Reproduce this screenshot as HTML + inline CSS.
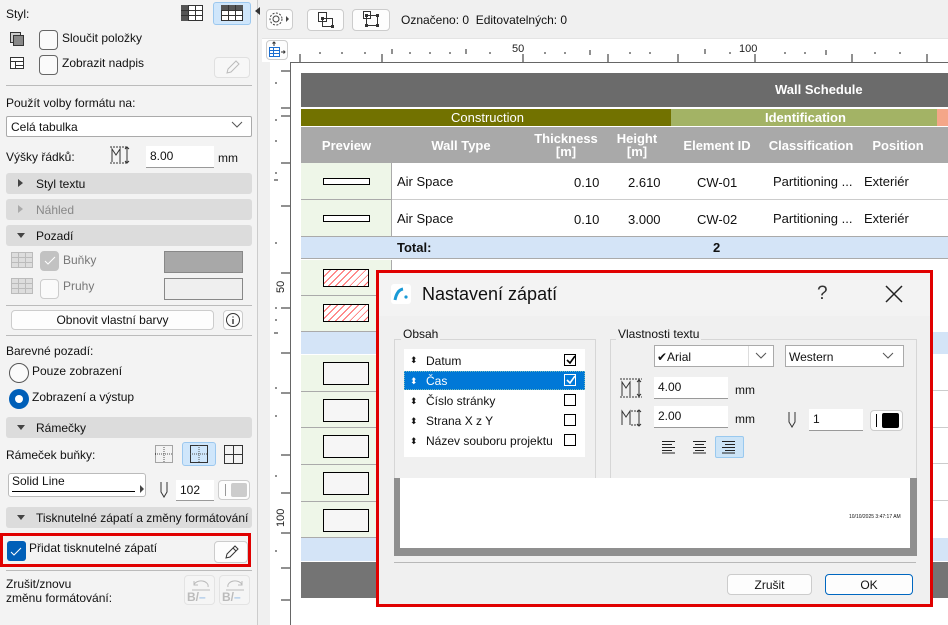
<!DOCTYPE html>
<html style="width:948px;height:625px;overflow:hidden"><head><meta charset="utf-8"><style>
*{box-sizing:border-box;margin:0;padding:0}
html,body{overflow:hidden}
body{width:948px;height:625px;overflow:hidden;background:#f0f0f0;font-family:"Liberation Sans",sans-serif;font-size:12px;color:#111;position:relative}
.a{position:absolute}
.t{position:absolute;white-space:nowrap;line-height:14px}
.cb{position:absolute;width:19px;height:20px;border:1px solid #666;border-radius:4px;background:#fafafa}
.bar{position:absolute;left:6px;width:246px;height:21px;background:#dcdcdc;border-radius:3px}
.bar span{position:absolute;left:30px;top:4px;font-size:12px}
.bar i{position:absolute;left:11px;top:8px;width:0;height:0;border-left:4px solid transparent;border-right:4px solid transparent;border-top:5px solid #444}
.bar i.r{left:12px;top:6px;border-top:4px solid transparent;border-bottom:4px solid transparent;border-left:5px solid #444;border-right:0}
.sep{position:absolute;left:6px;width:246px;height:1px;background:#bbb}
.btn{position:absolute;background:#fdfdfd;border:1px solid #ccc;border-radius:4px}
.inp{position:absolute;background:#fff;border-bottom:1px solid #999;font-size:12px;padding:3px 0 0 4px}
.cell{position:absolute;white-space:nowrap;font-size:13px;line-height:14px}
.hd{position:absolute;color:#fff;font-weight:bold;font-size:13px;text-align:center;line-height:13px}
.pv{position:absolute;left:301px;width:91px;background:#eef6e8;border-bottom:1px solid #aaa;border-right:1px solid #aaa}
.wall{position:absolute;left:22px;width:47px;height:7px;border:1px solid #000;background:#fff}
.hx{position:absolute;left:22px;width:46px;height:18px;border:1px solid #000;background:repeating-linear-gradient(135deg,#fff 0 4px,#f66 4px 5px)}
.sq{position:absolute;left:22px;width:46px;height:23px;border:1px solid #000;background:#f6f6f6}
</style></head><body>

<!-- LEFT PANEL -->
<div class="a" style="left:0;top:0;width:258px;height:625px;background:#f3f3f3;border-right:1px solid #ccc"></div>
<div class="t" style="left:6px;top:7px">Styl:</div>
<svg class="a" style="left:181px;top:5px" width="22" height="16"><rect x="0.5" y="0.5" width="21" height="15" fill="#fff" stroke="#333"/><rect x="0" y="0" width="7" height="16" fill="#555"/><path d="M0 5.5H22M0 10.5H22M7.5 0V16M14.5 0V16" stroke="#333"/></svg>
<div class="a" style="left:213px;top:2px;width:38px;height:23px;background:#cfe6fb;border:1px solid #9cc8ef;border-radius:3px"></div>
<svg class="a" style="left:221px;top:5px" width="22" height="16"><rect x="0.5" y="0.5" width="21" height="15" fill="#fff" stroke="#333"/><rect x="0" y="0" width="22" height="5" fill="#555"/><path d="M0 5.5H22M0 10.5H22M7.5 0V16M14.5 0V16" stroke="#333"/></svg>
<svg class="a" style="left:10px;top:32px" width="14" height="14"><rect x="0.5" y="0.5" width="10" height="10" fill="#ccc" stroke="#333"/><rect x="3.5" y="3.5" width="10" height="10" fill="#888" stroke="#333"/></svg>
<div class="cb" style="left:39px;top:30px"></div>
<div class="t" style="left:62px;top:31px">Sloučit položky</div>
<svg class="a" style="left:10px;top:57px" width="14" height="12"><rect x="0.5" y="0.5" width="13" height="11" fill="#fff" stroke="#333"/><path d="M0 4.5H14M5.5 4V12M5 8.5H14" stroke="#333"/></svg>
<div class="cb" style="left:39px;top:55px"></div>
<div class="t" style="left:62px;top:56px">Zobrazit nadpis</div>
<div class="btn" style="left:214px;top:57px;width:36px;height:21px;background:#f7f7f7;border-color:#e0e0e0"></div>
<svg class="a" style="left:224px;top:60px" width="16" height="16"><path d="M3 13l1-4 8-8 3 3-8 8z" fill="none" stroke="#bbb"/></svg>
<div class="sep" style="top:85px"></div>
<div class="t" style="left:6px;top:96px">Použít volby formátu na:</div>
<div class="a" style="left:6px;top:116px;width:246px;height:21px;background:#fff;border:1px solid #aaa;border-radius:2px"></div>
<div class="t" style="left:11px;top:120px">Celá tabulka</div>
<svg class="a" style="left:231px;top:121px" width="12" height="8"><path d="M1 1l5 5 5-5" fill="none" stroke="#555"/></svg>
<div class="t" style="left:6px;top:150px">Výšky řádků:</div>
<svg class="a" style="left:108px;top:144px" width="24" height="22"><path d="M2 3h18M2 19h18" stroke="#333" stroke-dasharray="2 1"/><path d="M4 18V5l4 6 4-6v13" fill="none" stroke="#333"/><path d="M19 3v16M17 5l2-2 2 2M17 17l2 2 2-2" fill="none" stroke="#333"/></svg>
<div class="inp" style="left:146px;top:146px;width:68px;height:22px">8.00</div>
<div class="t" style="left:218px;top:151px">mm</div>
<div class="bar" style="top:173px"><i class="r"></i><span>Styl textu</span></div>
<div class="bar" style="top:199px"><i class="r" style="border-left-color:#aaa"></i><span style="color:#888">Náhled</span></div>
<div class="bar" style="top:225px"><i></i><span>Pozadí</span></div>
<svg class="a" style="left:11px;top:252px" width="22" height="16"><rect x="0.5" y="0.5" width="21" height="15" fill="#ddd" stroke="#bbb"/><path d="M0 5.5H22M0 10.5H22M7.5 0V16M14.5 0V16" stroke="#bbb"/></svg>
<div class="cb" style="left:40px;top:251px;background:#c2c2c2;border-color:#c2c2c2"></div>
<svg class="a" style="left:44px;top:256px" width="12" height="10"><path d="M1 5l3 3 7-7" fill="none" stroke="#fff"/></svg>
<div class="t" style="left:63px;top:253px;color:#777">Buňky</div>
<div class="a" style="left:164px;top:251px;width:79px;height:22px;background:#a8a8a8;border:1px solid #888"></div>
<svg class="a" style="left:11px;top:278px" width="22" height="16"><rect x="0.5" y="0.5" width="21" height="15" fill="#ddd" stroke="#bbb"/><path d="M0 5.5H22M0 10.5H22M7.5 0V16M14.5 0V16" stroke="#bbb"/></svg>
<div class="cb" style="left:40px;top:279px;border-color:#ccc"></div>
<div class="t" style="left:63px;top:279px;color:#777">Pruhy</div>
<div class="a" style="left:164px;top:278px;width:79px;height:22px;background:#efefef;border:1px solid #888"></div>
<div class="sep" style="top:305px"></div>
<div class="btn" style="left:11px;top:310px;width:203px;height:20px"></div>
<div class="t" style="left:11px;top:313px;width:203px;text-align:center">Obnovit vlastní barvy</div>
<div class="btn" style="left:223px;top:310px;width:20px;height:20px"></div>
<svg class="a" style="left:225px;top:312px" width="16" height="16"><circle cx="8" cy="8" r="6.5" fill="none" stroke="#333"/><path d="M8 7v5M8 4.5v1" stroke="#333" stroke-width="1.4"/></svg>
<div class="sep" style="top:335px"></div>
<div class="t" style="left:6px;top:344px">Barevné pozadí:</div>
<div class="a" style="left:9px;top:363px;width:20px;height:20px;border:1px solid #555;border-radius:50%;background:#fafafa"></div>
<div class="t" style="left:32px;top:364px">Pouze zobrazení</div>
<div class="a" style="left:9px;top:389px;width:20px;height:20px;border-radius:50%;background:#005fb8"></div>
<div class="a" style="left:15px;top:395px;width:8px;height:8px;border-radius:50%;background:#fff"></div>
<div class="t" style="left:32px;top:390px">Zobrazení a výstup</div>
<div class="bar" style="top:417px"><i></i><span>Rámečky</span></div>
<div class="t" style="left:6px;top:448px">Rámeček buňky:</div>
<svg class="a" style="left:155px;top:445px" width="18" height="18"><rect x="0.5" y="0.5" width="17" height="17" fill="none" stroke="#555" stroke-dasharray="1 1"/><path d="M9 0v18M0 9h18" stroke="#555" stroke-dasharray="1 1"/></svg>
<div class="a" style="left:182px;top:442px;width:34px;height:24px;background:#cfe6fb;border:1px solid #9cc8ef;border-radius:3px"></div>
<svg class="a" style="left:190px;top:445px" width="18" height="18"><rect x="0.5" y="0.5" width="17" height="17" fill="none" stroke="#333"/><path d="M9 0v18M0 9h18" stroke="#555" stroke-dasharray="1 1"/></svg>
<svg class="a" style="left:224px;top:445px" width="19" height="19"><rect x="0.5" y="0.5" width="18" height="18" fill="none" stroke="#333"/><path d="M9.5 0v19M0 9.5h19" stroke="#333"/></svg>
<div class="a" style="left:8px;top:473px;width:138px;height:24px;background:#fff;border:1px solid #bbb;border-radius:3px"></div>
<div class="t" style="left:12px;top:474px">Solid Line</div>
<div class="a" style="left:12px;top:491px;width:123px;height:1px;background:#000"></div>
<div class="a" style="left:140px;top:485px;border-top:4px solid transparent;border-bottom:4px solid transparent;border-left:4px solid #444"></div>
<svg class="a" style="left:158px;top:481px" width="12" height="18"><path d="M3 1v10l3 5 3-5V1" fill="none" stroke="#333"/></svg>
<div class="inp" style="left:176px;top:480px;width:38px;height:21px">102</div>
<div class="btn" style="left:218px;top:480px;width:32px;height:20px"></div>
<div class="a" style="left:231px;top:483px;width:16px;height:14px;background:#ccc;border-radius:2px"></div>
<div class="a" style="left:225px;top:484px;width:1px;height:12px;background:#999"></div>
<div class="bar" style="top:507px"><i></i><span>Tisknutelné zápatí a změny formátování</span></div>
<div class="a" style="left:0;top:533px;width:251px;height:34px;border:3px solid #e00000"></div>
<div class="a" style="left:7px;top:541px;width:19px;height:20px;background:#005fb8;border-radius:3px"></div>
<svg class="a" style="left:10px;top:547px" width="13" height="10"><path d="M1 5l3 3 7-7" fill="none" stroke="#fff"/></svg>
<div class="t" style="left:29px;top:541px">Přidat tisknutelné zápatí</div>
<div class="btn" style="left:214px;top:541px;width:34px;height:22px"></div>
<svg class="a" style="left:223px;top:543px" width="16" height="18"><path d="M3 15l1-4 8-8 3 3-8 8zM10 5l3 3" fill="none" stroke="#333"/></svg>
<div class="sep" style="top:570px"></div>
<div class="t" style="left:6px;top:577px">Zrušit/znovu</div>
<div class="t" style="left:6px;top:591px">změnu formátování:</div>
<div class="btn" style="left:184px;top:575px;width:31px;height:30px;background:#f5f5f5;border-color:#e3e3e3"></div>
<div class="btn" style="left:219px;top:575px;width:31px;height:30px;background:#f5f5f5;border-color:#e3e3e3"></div>
<div class="t" style="left:187px;top:590px;color:#bbb;font-weight:bold">B/<span style="color:#a8c8e8">–</span></div>
<div class="t" style="left:222px;top:590px;color:#bbb;font-weight:bold">B/<span style="color:#a8c8e8">–</span></div>
<svg class="a" style="left:190px;top:577px" width="22" height="14"><path d="M4 8a7 5 0 1 1 14 2M4 4v4h4" fill="none" stroke="#bbb"/><path d="M2 13h18" stroke="#bbb"/></svg>
<svg class="a" style="left:224px;top:577px" width="22" height="14"><path d="M18 8a7 5 0 1 0-14 2M18 4v4h-4" fill="none" stroke="#bbb"/><path d="M2 13h18" stroke="#bbb"/></svg>
<div class="a" style="left:255px;top:7px;border-top:4px solid transparent;border-bottom:4px solid transparent;border-right:5px solid #333"></div>

<!-- RIGHT TOOLBAR -->
<div class="btn" style="left:266px;top:9px;width:27px;height:21px"></div>
<svg class="a" style="left:268px;top:11px" width="24" height="17"><circle cx="8" cy="8" r="3" fill="none" stroke="#444"/><circle cx="8" cy="8" r="6" fill="none" stroke="#444" stroke-dasharray="2 1.5"/><path d="M18 5l3 3-3 3z" fill="#444"/></svg>
<div class="btn" style="left:307px;top:9px;width:37px;height:22px"></div>
<svg class="a" style="left:317px;top:11px" width="18" height="18"><rect x="1.5" y="1.5" width="8" height="9" fill="#fff" stroke="#333"/><rect x="5.5" y="7.5" width="10" height="8" fill="none" stroke="#333"/><rect x="4" y="6" width="3" height="3" fill="#333"/><rect x="14" y="14" width="3" height="3" fill="#333"/></svg>
<div class="btn" style="left:352px;top:9px;width:38px;height:22px"></div>
<svg class="a" style="left:361px;top:10px" width="20" height="19"><rect x="2.5" y="1.5" width="7" height="7" fill="#fff" stroke="#333"/><rect x="5.5" y="5.5" width="11" height="10" fill="none" stroke="#333"/><rect x="4" y="4" width="3" height="3" fill="#333"/><rect x="15" y="14" width="3" height="3" fill="#333"/><rect x="15" y="4" width="3" height="3" fill="#333"/><rect x="4" y="14" width="3" height="3" fill="#333"/></svg>
<div class="t" style="left:401px;top:13px">Označeno: 0&nbsp; Editovatelných: 0</div>

<!-- RULERS -->
<div class="a" style="left:262px;top:38px;width:686px;height:587px;background:#fff"></div>
<div class="a" style="left:262px;top:38px;width:686px;height:1px;background:#e4e4e4"></div>
<div class="btn" style="left:266px;top:40px;width:22px;height:20px"></div>
<svg class="a" style="left:268px;top:41px" width="18" height="18"><path d="M6 1v4M4.5 2.5L6 1l1.5 1.5" fill="none" stroke="#333"/><rect x="1.5" y="6.5" width="10" height="9" fill="#fff" stroke="#1b6ed0"/><path d="M1 9.5h11M1 12.5h11M5.5 7v9" stroke="#1b6ed0"/><path d="M13 11h4M15.5 9.5L17 11l-1.5 1.5" fill="none" stroke="#333"/></svg>
<div class="a" style="left:290px;top:62px;width:658px;height:1px;background:#666"></div>
<div class="a" style="left:290px;top:62px;width:1px;height:563px;background:#666"></div>
<div class="a" style="left:262px;top:62px;width:8px;height:563px;background:#f0f0f0"></div>
<svg class="a" style="left:290px;top:40px" width="658" height="22">
<g stroke="#222">
<path d="M10 14v8M92 14v8M233 14v8M318 14v8M388 14v8M465 14v8M562 14v8M637 14v8"/>
<path d="M102 9v5M176 9v5M300 10v5M415 9v5M536 10v5"/>
<path d="M30 12v2M52 12v2M75 12v2M120 12v2M140 12v2M160 12v2M200 12v2M255 12v2M275 12v2M340 12v2M360 12v2M440 12v2M495 12v2M515 12v2M585 12v2M610 12v2"/>
</g>
<text x="222" y="12" font-family="Liberation Sans" font-size="11" fill="#222">50</text>
<text x="449" y="12" font-family="Liberation Sans" font-size="11" fill="#222">100</text>
</svg>
<svg class="a" style="left:262px;top:63px" width="28" height="562">
<g stroke="#222"><path d="M19 8h9M19 45h9M19 53h9M19 100h9M19 143h9M19 210h9M19 245h9M19 290h9M19 330h9M19 392h9M19 430h9M19 470h9M19 505h9M19 537h9"/>
<path d="M13 20h2M13 57h2M13 78h2M13 110h2M13 180h2M13 245h2M13 257h2M13 325h2M13 353h2M13 413h2M13 488h2M12 117h4M12 270h4"/></g>
<text transform="translate(22,230) rotate(-90)" font-family="Liberation Sans" font-size="11" fill="#222">50</text>
<text transform="translate(22,464) rotate(-90)" font-family="Liberation Sans" font-size="11" fill="#222">100</text>
</svg>

<!-- TABLE -->
<div class="a" style="left:301px;top:73px;width:647px;height:34px;background:#6b6b6b"></div>
<div class="t" style="left:775px;top:83px;color:#fff;font-weight:bold;font-size:13px">Wall Schedule</div>
<div class="a" style="left:301px;top:109px;width:370px;height:17px;background:#727200"></div>
<div class="t" style="left:451px;top:111px;color:#fff;font-size:13px">Construction</div>
<div class="a" style="left:671px;top:109px;width:266px;height:17px;background:#a3b365"></div>
<div class="t" style="left:765px;top:111px;color:#fff;font-weight:bold;font-size:13px">Identification</div>
<div class="a" style="left:937px;top:109px;width:11px;height:17px;background:#f4a688"></div>
<div class="a" style="left:301px;top:127px;width:647px;height:36px;background:#a9a9a9"></div>
<div class="hd" style="left:301px;top:139px;width:91px">Preview</div>
<div class="hd" style="left:420px;top:139px;width:82px">Wall Type</div>
<div class="hd" style="left:530px;top:132px;width:72px">Thickness<br>[m]</div>
<div class="hd" style="left:612px;top:132px;width:50px">Height<br>[m]</div>
<div class="hd" style="left:675px;top:139px;width:84px">Element ID</div>
<div class="hd" style="left:765px;top:139px;width:92px">Classification</div>
<div class="hd" style="left:862px;top:139px;width:72px">Position</div>

<div class="pv" style="top:163px;height:37px"><div class="wall" style="top:15px"></div></div>
<div class="pv" style="top:200px;height:37px"><div class="wall" style="top:15px"></div></div>
<div class="a" style="left:392px;top:199px;width:556px;height:1px;background:#ccc"></div>
<div class="a" style="left:392px;top:236px;width:556px;height:1px;background:#aaa"></div>
<div class="cell" style="left:397px;top:175px">Air Space</div>
<div class="cell" style="left:574px;top:176px">0.10</div>
<div class="cell" style="left:628px;top:176px">2.610</div>
<div class="cell" style="left:697px;top:176px">CW-01</div>
<div class="cell" style="left:773px;top:175px">Partitioning ...</div>
<div class="cell" style="left:864px;top:175px">Exteriér</div>
<div class="cell" style="left:397px;top:212px">Air Space</div>
<div class="cell" style="left:574px;top:213px">0.10</div>
<div class="cell" style="left:628px;top:213px">3.000</div>
<div class="cell" style="left:697px;top:213px">CW-02</div>
<div class="cell" style="left:773px;top:212px">Partitioning ...</div>
<div class="cell" style="left:864px;top:212px">Exteriér</div>
<div class="a" style="left:301px;top:237px;width:647px;height:22px;background:#d4e4f7;border-bottom:1px solid #aaa"></div>
<div class="cell" style="left:397px;top:241px;font-weight:bold">Total:</div>
<div class="cell" style="left:713px;top:241px;font-weight:bold">2</div>

<div class="pv" style="top:260px;height:36px"><div class="hx" style="top:9px"></div></div>
<div class="pv" style="top:296px;height:36px"><div class="hx" style="top:8px"></div></div>
<div class="a" style="left:301px;top:332px;width:647px;height:22px;background:#d4e4f7"></div>
<div class="pv" style="top:355px;height:37px"><div class="sq" style="top:7px"></div></div>
<div class="pv" style="top:392px;height:36px"><div class="sq" style="top:7px"></div></div>
<div class="pv" style="top:428px;height:37px"><div class="sq" style="top:7px"></div></div>
<div class="pv" style="top:465px;height:37px"><div class="sq" style="top:7px"></div></div>
<div class="pv" style="top:502px;height:36px"><div class="sq" style="top:7px"></div></div>
<div class="a" style="left:301px;top:538px;width:647px;height:23px;background:#d4e4f7"></div>
<div class="a" style="left:301px;top:562px;width:647px;height:36px;background:#747474"></div>
<div class="a" style="left:392px;top:390px;width:556px;height:1px;background:#ccc"></div>
<div class="a" style="left:392px;top:427px;width:556px;height:1px;background:#ccc"></div>
<div class="a" style="left:392px;top:463px;width:556px;height:1px;background:#ccc"></div>
<div class="a" style="left:392px;top:500px;width:556px;height:1px;background:#ccc"></div>

<!-- DIALOG -->
<div class="a" style="left:376px;top:270px;width:557px;height:337px;border:3px solid #e00000;background:#f0f0f0"></div>
<div class="a" style="left:379px;top:273px;width:551px;height:43px;background:#f3f3f3"></div>
<svg class="a" style="left:391px;top:284px" width="20" height="20"><rect x="0" y="0" width="20" height="20" rx="3" fill="#fff"/><path d="M4 16Q6 6 12 5" fill="none" stroke="#1a9ad6" stroke-width="3"/><circle cx="15" cy="13" r="1.6" fill="#1a9ad6"/></svg>
<div class="t" style="left:422px;top:284px;font-size:18px;line-height:20px">Nastavení zápatí</div>
<div class="t" style="left:817px;top:284px;font-size:19px;line-height:20px;color:#333">?</div>
<svg class="a" style="left:885px;top:285px" width="18" height="18"><path d="M1 1l16 16M17 1L1 17" stroke="#222" stroke-width="1.5"/></svg>

<div class="a" style="left:394px;top:339px;width:202px;height:143px;border:1px solid #d6d6d6"></div>
<div class="t" style="left:401px;top:327px;background:#f0f0f0;padding:0 2px">Obsah</div>
<div class="a" style="left:404px;top:349px;width:181px;height:108px;background:#fff"></div>
<div class="a" style="left:404px;top:371px;width:181px;height:19px;background:#0078d7;border:1px dotted #7bb"></div>
<div class="t" style="left:410px;top:353px;font-size:9px">⬍</div>
<div class="t" style="left:410px;top:374px;font-size:9px;color:#fff">⬍</div>
<div class="t" style="left:410px;top:394px;font-size:9px">⬍</div>
<div class="t" style="left:410px;top:414px;font-size:9px">⬍</div>
<div class="t" style="left:410px;top:434px;font-size:9px">⬍</div>
<div class="t" style="left:426px;top:354px">Datum</div>
<div class="t" style="left:426px;top:374px;color:#fff">Čas</div>
<div class="t" style="left:426px;top:394px">Číslo stránky</div>
<div class="t" style="left:426px;top:414px">Strana X z Y</div>
<div class="t" style="left:426px;top:434px">Název souboru projektu</div>
<div class="a" style="left:564px;top:354px;width:12px;height:12px;border:1px solid #000;background:#fff"></div>
<svg class="a" style="left:565px;top:355px" width="11" height="11"><path d="M2 5l3 3 5-7" fill="none" stroke="#000" stroke-width="1.6"/></svg>
<div class="a" style="left:564px;top:374px;width:12px;height:12px;border:1px solid #fff;background:#0078d7"></div>
<svg class="a" style="left:565px;top:375px" width="11" height="11"><path d="M2 5l3 3 5-7" fill="none" stroke="#fff" stroke-width="1.6"/></svg>
<div class="a" style="left:564px;top:394px;width:12px;height:12px;border:1px solid #000;background:#fff"></div>
<div class="a" style="left:564px;top:414px;width:12px;height:12px;border:1px solid #000;background:#fff"></div>
<div class="a" style="left:564px;top:434px;width:12px;height:12px;border:1px solid #000;background:#fff"></div>

<div class="a" style="left:610px;top:339px;width:307px;height:143px;border:1px solid #d6d6d6"></div>
<div class="t" style="left:616px;top:327px;background:#f0f0f0;padding:0 2px">Vlastnosti textu</div>
<div class="a" style="left:654px;top:345px;width:120px;height:22px;background:#fff;border:1px solid #aaa"></div>
<div class="t" style="left:657px;top:350px">✔Arial</div>
<div class="a" style="left:748px;top:346px;width:1px;height:20px;background:#ddd"></div>
<svg class="a" style="left:755px;top:352px" width="12" height="8"><path d="M1 1l5 5 5-5" fill="none" stroke="#555"/></svg>
<div class="a" style="left:785px;top:345px;width:119px;height:22px;background:#fff;border:1px solid #aaa"></div>
<div class="t" style="left:789px;top:350px">Western</div>
<svg class="a" style="left:882px;top:352px" width="12" height="8"><path d="M1 1l5 5 5-5" fill="none" stroke="#555"/></svg>
<svg class="a" style="left:619px;top:377px" width="26" height="22"><path d="M1 2h22M1 20h22" stroke="#333" stroke-dasharray="2 1"/><path d="M3 19V5l4 6 4-6v14" fill="none" stroke="#333"/><path d="M20 3v16M18 5l2-2 2 2M18 17l2 2 2-2" fill="none" stroke="#333"/></svg>
<div class="inp" style="left:654px;top:377px;width:74px;height:22px">4.00</div>
<div class="t" style="left:735px;top:383px">mm</div>
<svg class="a" style="left:619px;top:407px" width="26" height="22"><path d="M12 4h8M12 18h8" stroke="#333" stroke-dasharray="2 1"/><path d="M3 18V4l4 6 4-6v14" fill="none" stroke="#333"/><path d="M20 3v16M18 5l2-2 2 2M18 17l2 2 2-2" fill="none" stroke="#333"/></svg>
<div class="inp" style="left:654px;top:406px;width:74px;height:22px">2.00</div>
<div class="t" style="left:735px;top:412px">mm</div>
<svg class="a" style="left:786px;top:411px" width="12" height="18"><path d="M3 1v10l3 5 3-5V1" fill="none" stroke="#333"/></svg>
<div class="inp" style="left:809px;top:409px;width:54px;height:22px">1</div>
<div class="btn" style="left:870px;top:410px;width:33px;height:21px"></div>
<div class="a" style="left:876px;top:414px;width:1px;height:13px;background:#000"></div>
<div class="a" style="left:882px;top:413px;width:17px;height:15px;background:#000;border-radius:2px"></div>
<div class="a" style="left:715px;top:436px;width:29px;height:22px;background:#cce4f7;border:1px solid #99c9ef;border-radius:2px"></div>
<svg class="a" style="left:661px;top:440px" width="90" height="14"><g stroke="#222"><path d="M1 1.5h13M1 4.5h10M1 7.5h13M1 10.5h10M1 13h13"/><path d="M32 1.5h13M34 4.5h9M32 7.5h13M34 10.5h9M32 13h13"/><path d="M61 1.5h13M64 4.5h10M61 7.5h13M64 10.5h10M61 13h13"/></g></svg>

<div class="a" style="left:394px;top:478px;width:523px;height:78px;background:#8f8f8f"></div>
<div class="a" style="left:400px;top:478px;width:510px;height:70px;background:#fff"></div>
<div class="t" style="left:849px;top:514px;font-size:5px;line-height:6px">10/10/2025 3:47:17 AM</div>
<div class="a" style="left:394px;top:562px;width:522px;height:1px;background:#b8b8b8"></div>
<div class="btn" style="left:727px;top:574px;width:85px;height:21px"></div>
<div class="t" style="left:727px;top:578px;width:85px;text-align:center">Zrušit</div>
<div class="btn" style="left:825px;top:574px;width:88px;height:21px;border-color:#0067c0"></div>
<div class="t" style="left:825px;top:578px;width:88px;text-align:center">OK</div>
</body></html>
